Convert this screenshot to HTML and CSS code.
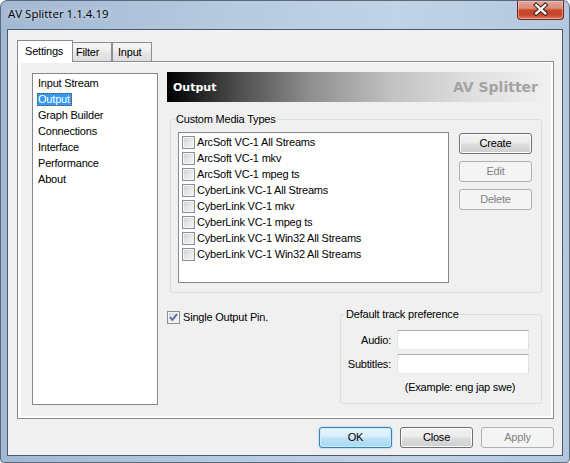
FILE: index.html
```html
<!DOCTYPE html>
<html>
<head>
<meta charset="utf-8">
<link rel="stylesheet" href="styles.css">
</head>
<body>
<div class="window">
  <div class="titlebar">
    <span class="title">AV Splitter 1.1.4.19</span>
    <div class="closebtn">
      <svg width="47" height="19" viewBox="0 0 47 19">
        <path d="M19 5 L28.5 13.5 M28.5 5 L19 13.5" stroke="#3b2420" stroke-width="4.6" stroke-linecap="square" fill="none"/>
        <path d="M19 5 L28.5 13.5 M28.5 5 L19 13.5" stroke="#ffffff" stroke-width="2.4" stroke-linecap="square" fill="none"/>
      </svg>
    </div>
  </div>
  <div class="client">
    <div class="tabs">
      <div class="tab sel">Settings</div>
      <div class="tab t-filter">Filter</div>
      <div class="tab t-input">Input</div>
    </div>
    <div class="pane">
      <div class="page">
        <ul class="nav">
          <li><span class="ni">Input Stream</span></li>
          <li><span class="ni selected">Output</span></li>
          <li><span class="ni">Graph Builder</span></li>
          <li><span class="ni">Connections</span></li>
          <li><span class="ni">Interface</span></li>
          <li><span class="ni">Performance</span></li>
          <li><span class="ni">About</span></li>
        </ul>
        <div class="content">
          <div class="banner">
            <span class="b-left">Output</span>
            <span class="b-right">AV Splitter</span>
          </div>
          <fieldset class="group g1">
            <legend>Custom Media Types</legend>
            <div class="g1-body">
              <ul class="checklist">
                <li><span class="cb"></span><span>ArcSoft VC-1 All Streams</span></li>
                <li><span class="cb"></span><span>ArcSoft VC-1 mkv</span></li>
                <li><span class="cb"></span><span>ArcSoft VC-1 mpeg ts</span></li>
                <li><span class="cb"></span><span>CyberLink VC-1 All Streams</span></li>
                <li><span class="cb"></span><span>CyberLink VC-1 mkv</span></li>
                <li><span class="cb"></span><span>CyberLink VC-1 mpeg ts</span></li>
                <li><span class="cb"></span><span>CyberLink VC-1 Win32 All Streams</span></li>
                <li><span class="cb"></span><span>CyberLink VC-1 Win32 All Streams</span></li>
              </ul>
              <div class="sidebtns">
                <div class="btn">Create</div>
                <div class="btn disabled">Edit</div>
                <div class="btn disabled">Delete</div>
              </div>
            </div>
          </fieldset>
          <div class="row2">
            <div class="single">
              <span class="cb checked">
                <svg width="11" height="11" viewBox="0 0 11 11"><path d="M2 5.2 L4.4 7.8 L9 2.2" stroke="#5a6f9a" stroke-width="1.9" fill="none"/></svg>
              </span>
              <span class="single-label">Single Output Pin.</span>
            </div>
            <fieldset class="group g2">
              <legend>Default track preference</legend>
              <div class="g2-grid">
                <span class="lbl">Audio:</span>
                <span class="edit"></span>
                <span class="lbl">Subtitles:</span>
                <span class="edit"></span>
                <span class="example">(Example: eng jap swe)</span>
              </div>
            </fieldset>
          </div>
        </div>
      </div>
    </div>
    <div class="bottombtns">
      <div class="btn default">OK</div>
      <div class="btn">Close</div>
      <div class="btn disabled">Apply</div>
    </div>
  </div>
</div>
</body>
</html>
```
FILE: styles.css
```css
* { box-sizing: border-box; }
html, body { margin: 0; padding: 0; background: #ffffff; }
body {
  font-family: "Liberation Sans", Arial, sans-serif;
  font-size: 11px;
  letter-spacing: -0.2px;
  color: #000;
}
ul { list-style: none; margin: 0; padding: 0; }

.window {
  width: 570px;
  height: 463px;
  border: 1px solid #5a6a7c;
  border-radius: 7px 7px 4px 4px;
  background: linear-gradient(to right, #a2b9d2 0%, #b6cae0 40%, #c1d3e6 70%, #b3c8de 100%);
  display: flex;
  flex-direction: column;
  overflow: hidden;
}
.titlebar {
  height: 28px;
  flex: none;
  display: flex;
  align-items: flex-start;
}
.title {
  flex: 1;
  font-family: "Open Sans", "Noto Sans", sans-serif;
  font-size: 11.5px;
  letter-spacing: 0;
  line-height: 16px;
  margin: 5px 0 0 7px;
  text-shadow: 0 0 6px rgba(255,255,255,0.8);
}
.closebtn {
  width: 47px;
  height: 19px;
  margin-right: 5px;
  border: 1px solid #6b2a20;
  border-top: none;
  border-radius: 0 0 4px 4px;
  background: linear-gradient(#e6a798 0%, #dc8a76 40%, #c8462c 52%, #c9482c 78%, #e07b5e 100%);
  box-shadow: inset 0 0 0 1px rgba(255,220,210,0.45);
  display: flex;
}
.closebtn svg { display: block; margin-top: -1px; }

.client {
  flex: 1;
  margin: 0 6px 6px 6px;
  border: 1px solid #4a5a6c;
  background: #f0f0f0;
  padding: 10px 8px 0 9px;
  display: flex;
  flex-direction: column;
}

.tabs {
  height: 21px;
  display: flex;
  align-items: flex-end;
}
.tab {
  height: 19px;
  border: 1px solid #898c95;
  border-bottom: none;
  background: linear-gradient(#f4f4f4 0%, #eeeeee 45%, #e4e4e4 55%, #dedede 100%);
  display: flex;
  align-items: center;
  padding-bottom: 1px;
}
.tab.sel {
  height: 22px;
  width: 56px;
  margin-bottom: -1px;
  background: #ffffff;
  z-index: 1;
  padding-left: 7px;
  padding-bottom: 2px;
}
.t-filter { width: 40px; margin-left: -1px; padding-left: 3px; }
.t-input { width: 40px; padding-left: 5px; }

.pane {
  height: 358px;
  flex: none;
  border: 1px solid #898c95;
  background: #ffffff;
  padding: 1px 2px 2px 3px;
  display: flex;
}
.page {
  flex: 1;
  background: #f0f0f0;
  display: flex;
  align-items: flex-start;
}

.nav {
  width: 126px;
  height: 332px;
  margin: 10px 0 0 11px;
  border: 1px solid #828790;
  background: #ffffff;
  padding-top: 1px;
}
.nav li {
  height: 16px;
  display: flex;
  align-items: center;
  padding-left: 4px;
}
.ni {
  border: 1px solid transparent;
  line-height: 11px;
  padding: 0 1px 0 0;
}
.ni.selected {
  background: #3399ff;
  color: #ffffff;
  border: 1px dotted #6b4c20;
}

.content {
  width: 376px;
  margin: 9px 0 0 9px;
  display: flex;
  flex-direction: column;
}
.banner {
  height: 30px;
  background: linear-gradient(to right, #000000 0%, #4a4a4a 18%, #8e8e8e 38%, #c2c2c2 60%, #dedede 80%, #efefef 100%);
  display: flex;
  align-items: center;
  justify-content: space-between;
  padding: 0 5px 0 6px;
  font-family: "DejaVu Sans", Verdana, sans-serif;
  font-weight: bold;
  letter-spacing: 0;
}
.b-left { color: #ffffff; font-size: 11px; }
.b-right { color: #a3a3a3; font-size: 14px; }

.group {
  margin: 0;
  padding: 0;
  min-width: 0;
  border: 1px solid #d5dfe5;
  border-radius: 3px;
}
.group legend {
  margin-left: 4px;
  padding: 0 1px;
  line-height: 13px;
}
.g1 {
  width: 372px;
  margin: 11px 0 0 3px;
  padding-bottom: 9px;
}
.g1-body {
  display: flex;
  align-items: flex-start;
}
.checklist {
  width: 271px;
  height: 151px;
  margin: 6px 0 0 7px;
  border: 1px solid #828790;
  background: #ffffff;
  padding-top: 1px;
}
.checklist li {
  height: 16px;
  display: flex;
  align-items: center;
  gap: 2px;
  padding-left: 3px;
}
.cb {
  width: 13px;
  height: 13px;
  flex: none;
  border: 1px solid #8e8f8f;
  background: linear-gradient(135deg, #cdd1d6 0%, #e6e8ea 55%, #f7f7f7 100%);
  box-shadow: inset 0 0 0 1px #f4f4f4;
  display: flex;
  align-items: center;
  justify-content: center;
}
.cb svg { display: block; }

.sidebtns {
  margin: 7px 0 0 10px;
  display: flex;
  flex-direction: column;
  gap: 7px;
}
.btn {
  width: 73px;
  height: 21px;
  border: 1px solid #707070;
  border-radius: 3px;
  background: linear-gradient(#f2f2f2 0%, #ebebeb 48%, #dddddd 52%, #cfcfcf 100%);
  box-shadow: inset 0 0 0 1px #fbfbfb;
  display: flex;
  align-items: center;
  justify-content: center;
  padding-bottom: 1px;
}
.btn.disabled {
  border-color: #adb2b5;
  background: #f4f4f4;
  box-shadow: none;
  color: #838383;
}
.btn.default {
  border-color: #3c7fb1;
  background: linear-gradient(#e9f5fd 0%, #d8eefb 48%, #bfe3f8 52%, #a9d8f3 100%);
  box-shadow: inset 0 0 0 1px #c8ecff, 0 0 2px #6ac4f5;
}

.row2 {
  margin-top: 15px;
  display: flex;
  align-items: flex-start;
  justify-content: space-between;
}
.single {
  margin-top: 3px;
  display: flex;
  align-items: center;
  gap: 3px;
}
.single .cb { background: linear-gradient(135deg, #d4d7db 0%, #e9eaec 55%, #f6f6f6 100%); }
.single-label { line-height: 13px; }

.g2 {
  width: 202px;
  margin-right: 1px;
  padding-bottom: 9px;
}
.g2-grid {
  display: grid;
  grid-template-columns: 50px 132px;
  column-gap: 6px;
  row-gap: 4px;
  padding-top: 9px;
}
.lbl {
  text-align: right;
  line-height: 20px;
}
.edit {
  height: 20px;
  background: #ffffff;
  border: 1px solid;
  border-color: #abadb3 #dbdfe6 #e3e9ef #e2e3ea;
}
.example {
  grid-column: 2;
  text-align: center;
  line-height: 13px;
  margin-top: 3px;
  padding-right: 6px;
}

.bottombtns {
  margin-top: 8px;
  display: flex;
  justify-content: flex-end;
  gap: 8px;
}
```
